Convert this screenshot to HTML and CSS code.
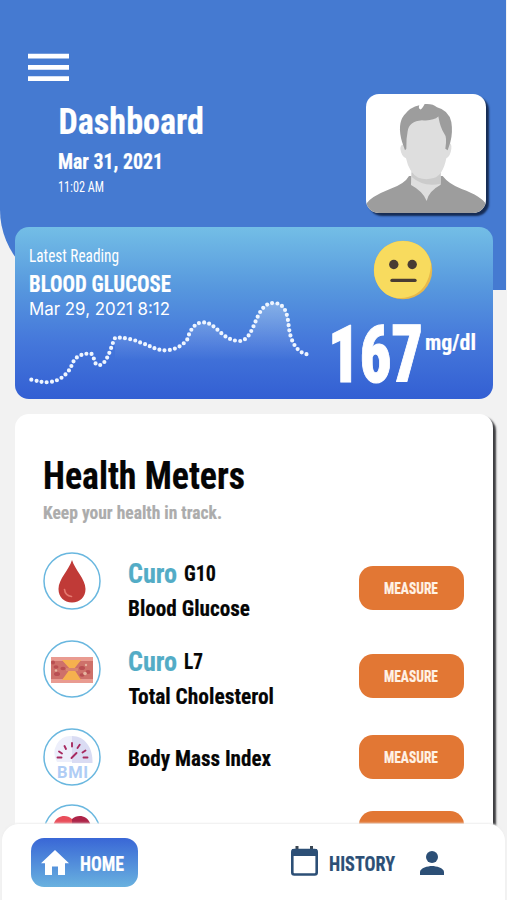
FILE: index.html
```html
<!DOCTYPE html>
<html lang="en">
<head>
<meta charset="utf-8">
<meta name="viewport" content="width=device-width, initial-scale=1">
<title>Dashboard</title>
<link rel="stylesheet" href="styles.css">
</head>
<body>
<div class="app">
  <header class="header">
    <svg class="menu" width="41" height="28" viewBox="0 0 41 28"><path d="M0 3.2h41M0 14.4h41M0 25.6h41" stroke="#fff" stroke-width="4.8"/></svg>
    <div class="heading">
      <div class="titles">
        <svg class="label" width="145" height="27"><text x="-0.500" y="26" font-size="37" textLength="145.500" lengthAdjust="spacingAndGlyphs">Dashboard</text></svg>
        <svg class="label date" width="104" height="16"><text x="-1" y="16" font-size="22.5" textLength="105" lengthAdjust="spacingAndGlyphs">Mar 31, 2021</text></svg>
        <svg class="label light time" width="45" height="11"><text x="-1" y="10.500" font-size="15.5" textLength="46" lengthAdjust="spacingAndGlyphs">11:02 AM</text></svg>
      </div>
      <svg class="avatar" viewBox="78 42 360 358" preserveAspectRatio="none">
        <path fill="#9d9d9d" d="M78 373Q92 351 150 328Q194 313 207 289H308Q326 313 365 328Q425 350 438 374V400H78z"/>
        <path fill="#dedede" d="M214 270H302V315Q265 335 260 364Q249 335 213 316z"/>
        <path fill="#cbcbcb" d="M215 278L302 278V312Q250 323 215 292z"/>
        <path fill="#dedede" d="M194 130Q200 95 257 95Q320 98 322 190Q336 185 334 207Q331 231 319 235Q309 286 281 295Q257 302 235 294Q207 278 198 235Q184 231 181 207Q181 193 194 194z"/>
        <path fill="#9d9d9d" d="M195 211L186 186Q171 133 192 106Q211 81 238 76Q234 85 241 89Q247 86 254 72Q279 70 291 82Q326 91 334 126Q339 158 331 187L323 211L316 207Q322 171 312 160Q301 144 295 110Q280 124 246 121Q207 124 203 154Q198 177 199 207z"/>
      </svg>
    </div>
  </header>

  <section class="reading">
    <svg class="chart" viewBox="45 51 1434 516">
      <defs><linearGradient id="area" x1="0" y1="275" x2="0" y2="450" gradientUnits="userSpaceOnUse"><stop stop-color="#fff" stop-opacity=".3"/><stop offset="1" stop-color="#fff" stop-opacity="0"/></linearGradient></defs>
      <path fill="url(#area)" d="M345 383C410 380 445 421 498 421C520 421 550 404 565 380C575 349 591 337 612 337C652 337 660 393 725 393C765 393 765 279 822 279C874 279 863 350 872 380C879 405 900 428 917 432V470H345z"/>
      <path class="dots" pathLength="74.5" d="M94 509C115 513 130 519 150 516C184 512 200 490 211 476C220 454 224 432 272 430C286 437 278 463 296 466C323 464 333 407 345 384C356 380 402 387 422 398C453 407 465 421 498 421C525 420 549 406 562 388C571 355 588 337 609 337C649 337 663 390 716 393C767 396 762 279 820 279C873 279 860 350 873 381C881 410 900 428 917 432L925 434"/>
    </svg>
    <div class="summary">
      <svg class="label light" width="90" height="14"><text x="-1" y="13.500" font-size="18.5" textLength="90" lengthAdjust="spacingAndGlyphs">Latest Reading</text></svg>
      <svg class="label metric" width="141" height="17"><text x="-1" y="17" font-size="23.5" textLength="142" lengthAdjust="spacingAndGlyphs">BLOOD GLUCOSE</text></svg>
      <svg class="label stamp" width="141" height="13"><text x="-1" y="13" font-size="17" textLength="141" lengthAdjust="spacingAndGlyphs">Mar 29, 2021 8:12</text></svg>
    </div>
    <div class="result">
      <svg class="face" width="60" height="60" viewBox="0 0 60 60"><circle cx="30" cy="30" r="29.2" fill="#e8b84a"/><path d="M30 1C13 1 1 14 1 30S13 59 28 58C48 57 57 43 58 24C55 9 44 1 30 1z" fill="#f8db5e"/><circle cx="20.8" cy="24.5" r="4.7" fill="#493c33"/><circle cx="39.2" cy="24.5" r="4.7" fill="#493c33"/><path d="M19 40.4h23" stroke="#493c33" stroke-width="3.4" stroke-linecap="round"/></svg>
      <div class="value">
        <svg class="label number" width="93" height="57"><text x="-2" y="57" font-size="80" textLength="95" lengthAdjust="spacingAndGlyphs">167</text></svg>
        <svg class="label unit" width="51" height="17"><text y="17" font-size="22.5" textLength="51" lengthAdjust="spacingAndGlyphs">mg/dl</text></svg>
      </div>
    </div>
  </section>

  <main class="meters">
    <svg class="label" width="201" height="28"><text x="-1" y="27.500" font-size="39.5" textLength="202" lengthAdjust="spacingAndGlyphs">Health Meters</text></svg>
    <svg class="label hint" width="179" height="14"><text x="-1" y="14" font-size="18.8" textLength="179" lengthAdjust="spacingAndGlyphs">Keep your health in track.</text></svg>
    <ul class="list">
      <li class="meter">
        <svg class="icon" viewBox="0 0 58 58"><circle class="ring" cx="29" cy="29" r="28"/><path fill="#c03a37" d="M29 8C26 18 15.500 27 15.500 37C15.500 45 21 50.500 29 50.500S42.500 45 42.500 37C42.500 27 32 18 29 8z"/><path d="M21.500 37.500C22 41.500 25 44 28.500 44.500" fill="none" stroke="#e47a70" stroke-width="1.700" stroke-linecap="round"/></svg>
        <div class="name">
          <div class="brand"><svg class="label curo" width="48" height="20"><text x="-1" y="20" font-size="28" textLength="49" lengthAdjust="spacingAndGlyphs">Curo</text></svg><svg class="label" width="31" height="18"><text x="-1" y="16" font-size="22.5" textLength="32" lengthAdjust="spacingAndGlyphs">G10</text></svg></div>
          <svg class="label" width="121" height="16"><text x="-1" y="16" font-size="22.5" textLength="122" lengthAdjust="spacingAndGlyphs">Blood Glucose</text></svg>
        </div>
        <button class="measure"><svg class="label" width="54" height="12"><text y="12" font-size="16.2" textLength="54" lengthAdjust="spacingAndGlyphs">MEASURE</text></svg></button>
      </li>
      <li class="meter">
        <svg class="icon" viewBox="0 0 58 58"><circle class="ring" cx="29" cy="29" r="28"/><path fill="#e99b91" d="M8 17h42v26H8z"/><path fill="#ce716a" d="M8 21h12l9 8 8-8h13v18H37l-8-8-9 8H8z"/><path fill="#f6b14e" d="M19 20h19l-7 9 7 11H19l8-11z"/><path fill="#d98570" d="M23 28h12v3H23z"/><g fill="#b94f52"><ellipse cx="13" cy="27" rx="2.500" ry="1.700"/><ellipse cx="20" cy="28.500" rx="2.600" ry="1.800"/><ellipse cx="14" cy="34" rx="3" ry="2"/><ellipse cx="39" cy="28" rx="3" ry="2"/><ellipse cx="45" cy="32" rx="2.500" ry="2"/><ellipse cx="39" cy="35" rx="2.500" ry="1.700"/><circle cx="10" cy="22.500" r="2"/></g><g fill="#e5b5a0"><circle cx="13" cy="30.500" r="1.200"/><circle cx="42" cy="33.500" r="1.800"/><circle cx="43" cy="25" r="1.200"/></g></svg>
        <div class="name">
          <div class="brand"><svg class="label curo" width="48" height="20"><text x="-1" y="20" font-size="28" textLength="49" lengthAdjust="spacingAndGlyphs">Curo</text></svg><svg class="label" width="18" height="18"><text x="-1" y="16" font-size="22.5" textLength="19" lengthAdjust="spacingAndGlyphs">L7</text></svg></div>
          <svg class="label" width="145" height="16"><text x="-0.500" y="16" font-size="22.5" textLength="145.500" lengthAdjust="spacingAndGlyphs">Total Cholesterol</text></svg>
        </div>
        <button class="measure"><svg class="label" width="54" height="12"><text y="12" font-size="16.2" textLength="54" lengthAdjust="spacingAndGlyphs">MEASURE</text></svg></button>
      </li>
      <li class="meter">
        <svg class="icon" viewBox="0 0 58 58"><circle class="ring" cx="29" cy="29" r="28"/><path fill="#edeffb" d="M14 34A16 17 0 0 1 29 8V34z"/><path fill="#dadcf3" d="M29 8C42 8 50 20 49.500 35H29z"/><path d="M29 15v3.500M21.500 18l1.500 3M16 23.500l3 2M14.500 29.500h4M34.500 20l2.200-3.200M39.500 24.500l3-2M40.500 29.500h4M28.500 30l5-5" stroke="#a72a60" stroke-width="1.900" stroke-linecap="round"/><text class="bmi" x="14" y="49.500" font-size="16.500" textLength="31" lengthAdjust="spacing">BMI</text></svg>
        <div class="name">
          <svg class="label" width="142" height="16"><text x="-1" y="16" font-size="22.5" textLength="143" lengthAdjust="spacingAndGlyphs">Body Mass Index</text></svg>
        </div>
        <button class="measure"><svg class="label" width="54" height="12"><text y="12" font-size="16.2" textLength="54" lengthAdjust="spacingAndGlyphs">MEASURE</text></svg></button>
      </li>
      <li class="meter">
        <svg class="icon" viewBox="0 0 58 58"><circle class="ring" cx="29" cy="29" r="28"/><path fill="#e94e5b" d="M29 15C24 10 14 11 11 19C8 31 20 39 29 48z"/><path fill="#ad2448" d="M29 15C34 10 44 11 47 19C50 31 38 39 29 48z"/></svg>
        <div class="name"></div>
        <button class="measure"></button>
      </li>
    </ul>
  </main>

  <nav class="nav">
    <a class="home">
      <svg width="28" height="25" viewBox="0 0 28 25"><path fill="#fff" d="M14 0L0 13.200H4V25H11V16.500H17V25H24V13.200H28z"/></svg>
      <svg class="label" width="44" height="14"><text y="15" font-size="20.3" textLength="44" lengthAdjust="spacingAndGlyphs">HOME</text></svg>
    </a>
    <a class="history">
      <svg width="27" height="30" viewBox="0 0 27 30"><path d="M6 0v5M20.500 0v5" stroke="#3b4652" stroke-width="3"/><rect x="1.300" y="4" width="24.400" height="24.500" rx="2" fill="none" stroke="#2c4f76" stroke-width="2.600"/><path fill="#2c4f76" d="M1 3h25v7H1z"/></svg>
      <svg class="label" width="66" height="15"><text y="16.500" font-size="21" textLength="66" lengthAdjust="spacingAndGlyphs">HISTORY</text></svg>
    </a>
    <svg class="person" width="24" height="24" viewBox="0 0 24 24"><circle cx="12" cy="6" r="6" fill="#2c4f76"/><path fill="#2c4f76" d="M0 24V21C0 17 8 15 12 15S24 17 24 21V24z"/></svg>
  </nav>
</div>
</body>
</html>
```
FILE: styles.css
```css
* {
  box-sizing: border-box;
}

body {
  margin: 0;
  background: #f2f2f2;
  font-family: Roboto, "Liberation Sans", sans-serif;
}

svg {
  display: block;
  flex: none;
}

.app {
  position: relative;
  width: 507px;
  height: 900px;
  overflow: hidden;
}

.label {
  overflow: visible;
  fill: currentColor;
  stroke: currentColor;
  stroke-width: 0.2px;
  font-weight: 700;
  font-stretch: 75%;
}

.light {
  stroke: none;
  font-weight: 400;
}

.header {
  width: 506px;
  height: 290px;
  padding: 53px 20px 0 28px;
  border-radius: 0 0 0 80px;
  background: #457ad1;
  color: #fff;
}

.heading {
  display: flex;
  justify-content: space-between;
  margin-top: 13px;
  padding-left: 31px;
}

.titles {
  padding-top: 14px;
}

.date {
  margin-top: 18px;
}

.time {
  margin-top: 12px;
}

.avatar {
  width: 120px;
  height: 119px;
  border-radius: 13px;
  background: #fff;
  box-shadow: 3px 3px 2px #162c54;
}

.reading {
  position: relative;
  display: flex;
  justify-content: space-between;
  width: 478px;
  height: 172px;
  margin: -63px 0 0 15px;
  padding: 13px 17px 0 15px;
  border-radius: 14px;
  background: linear-gradient(#73bee6, #5798de 35%, #4679db 65%, #335fd3);
  color: #fff;
}

.chart {
  position: absolute;
  inset: 0;
}

.dots {
  fill: none;
  stroke: #eef5ff;
  stroke-width: 12.5;
  stroke-linecap: round;
  stroke-dasharray: 0 1;
}

.summary {
  padding-top: 8px;
}

.metric {
  margin-top: 13px;
}

.stamp {
  margin-top: 10px;
  stroke: none;
  font-family: Inter, sans-serif;
  font-weight: 400;
}

.face {
  margin-left: 43px;
}

.value {
  display: flex;
  gap: 2px;
  margin-top: 25px;
}

.number {
  stroke-width: 1px;
  font-weight: 900;
}

.unit {
  margin-top: 8px;
}

.meters {
  width: 478px;
  height: 520px;
  margin: 15px 0 0 15px;
  padding: 47px 29.5px 0 29px;
  border-radius: 14px;
  background: #fff;
  box-shadow: 3px 3px 2px #3d3d40;
  color: #050505;
}

.hint {
  margin-top: 16px;
  color: #acacac;
}

.list {
  display: flex;
  flex-direction: column;
  margin: 33.5px 0 0;
  padding: 0;
  list-style: none;
}

.meter {
  display: grid;
  grid-template-columns: 85px 1fr 105px;
  height: 88px;
}

.meter:nth-child(3) {
  height: 75.5px;
}

.icon {
  width: 58px;
  height: 58px;
  margin: -0.5px 0 0 -1px;
}

.ring {
  fill: #fff;
  stroke: #69b7df;
  stroke-width: 1.5;
}

.bmi {
  fill: #b0cdf5;
  font-weight: 700;
}

.name {
  padding-top: 10.5px;
}

.meter:nth-child(3) .name {
  padding-top: 21.5px;
}

.brand {
  display: flex;
  align-items: flex-end;
  gap: 8px;
  margin-bottom: 17px;
}

.curo {
  color: #53acc6;
}

.measure {
  display: flex;
  align-items: center;
  justify-content: center;
  width: 105px;
  height: 44px;
  margin-top: 13px;
  padding: 0;
  border: 0;
  border-radius: 14px;
  background: #e27734;
  color: #fff2e6;
  font-family: inherit;
}

.meter:nth-child(n+3) .measure {
  margin-top: 6.5px;
}

.nav {
  position: absolute;
  left: 2px;
  bottom: 0;
  z-index: 1;
  display: flex;
  align-items: flex-start;
  width: 503px;
  height: 76px;
  padding: 14px 0 0 29px;
  border-radius: 17px 17px 0 0;
  background: #fff;
  box-shadow: 0 -1px 2px #eee;
  color: #2c4f76;
}

.home {
  display: flex;
  align-items: center;
  gap: 11px;
  width: 107px;
  height: 49px;
  padding-left: 10px;
  border-radius: 13px;
  background: linear-gradient(#3967d6, #69b1df);
  color: #fff;
}

.history {
  display: flex;
  align-items: center;
  gap: 11px;
  margin: 8px 0 0 153px;
}

.person {
  margin: 13px 0 0 25px;
}
```
